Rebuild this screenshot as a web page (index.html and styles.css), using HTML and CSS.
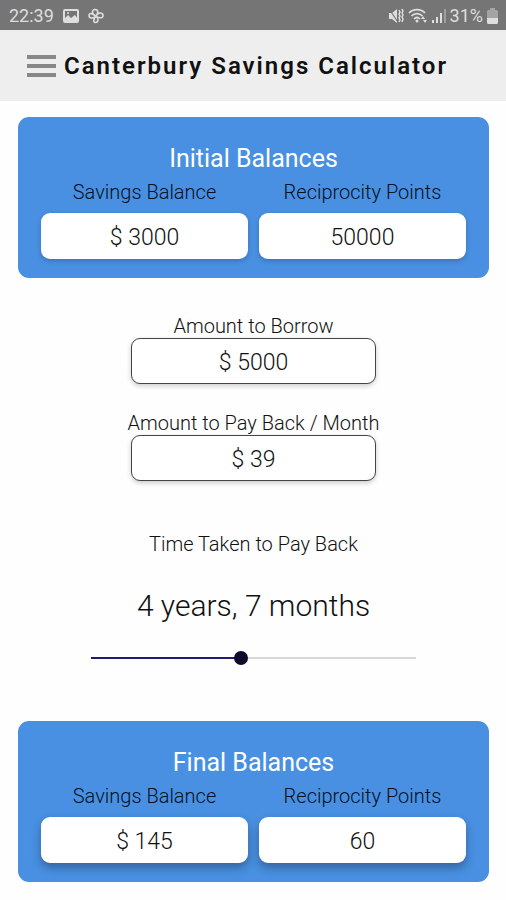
FILE: index.html
```html
<!DOCTYPE html>
<html lang="en">
<head>
  <meta charset="utf-8">
  <meta name="viewport" content="width=device-width, initial-scale=1">
  <title>Canterbury Savings Calculator</title>
  <link rel="stylesheet" href="styles.css">
</head>
<body>
  <div class="status">
    <div class="status-group">
      <span>22:39</span>
      <svg class="icon-picture" width="16" height="14" viewBox="0 0 16 14" aria-hidden="true">
        <rect x="1" y="1" width="14" height="12" rx="1" fill="none" stroke="currentColor" stroke-width="2"/>
        <path d="M2 11V9l3-3 3 3 4-3 3 4v2H2z" fill="currentColor"/>
        <circle cx="5" cy="4" r="1" fill="currentColor"/>
      </svg>
      <svg class="icon-fan" width="16" height="16" viewBox="0 0 16 16" fill="none" stroke="currentColor" stroke-width="1.6" aria-hidden="true">
        <path d="M8 8C4 7 3 1.500 7 1.500S10 6 8 8zM8 8c2-4 7-4 7-.5S10 10 8 8zM8 8c3 2 2.500 6.500-.5 6.500S6 10 8 8zM8 8c-3 3-7 2.500-7-.5S5 5.500 8 8z"/>
      </svg>
    </div>
    <div class="status-group status-right">
      <svg width="16" height="16" viewBox="0 0 16 16" fill="none" stroke="currentColor" aria-hidden="true">
        <path d="M1 5h3l5-4v14l-5-4H1z" fill="currentColor" stroke="none"/>
        <path d="M1 1l9 13" stroke="#757575" stroke-width="1.200"/>
        <path d="M11 2l1 2-1 2 1 2-1 2 1 2-1 2M14 1l1 2-1 2 1 2-1 2 1 2-1 3" stroke-width="1.500"/>
      </svg>
      <svg width="20" height="16" viewBox="0 0 20 16" fill="none" stroke="currentColor" stroke-width="1.700" aria-hidden="true">
        <path d="M1 5c4-4.500 12-4.500 16 0M3.500 8c3-3.300 8-3.300 11 0M6 11c2-2 4-2 6 0"/>
        <circle cx="9" cy="13" r="1.500" fill="currentColor" stroke="none"/>
        <path d="M13 11l2-3 2 3zM15 12h4l-2 3z" fill="currentColor" stroke="none"/>
      </svg>
      <svg width="14" height="14" viewBox="0 0 14 14" fill="currentColor" aria-hidden="true">
        <path d="M0 11h2v3H0zM4 8h2v6H4zM8 4h2v10H8z"/>
        <path d="M12 0h2v14h-2z" opacity=".4"/>
      </svg>
      <span>31%</span>
      <svg width="11" height="16" viewBox="0 0 11 16" fill="currentColor" aria-hidden="true">
        <path d="M3 0h5v2h2l1 1v7H0V3l1-1h2z" opacity=".45"/>
        <path d="M0 10h11v5l-1 1H1l-1-1z"/>
      </svg>
    </div>
  </div>

  <header class="header">
    <button class="menu" type="button" aria-label="Menu">
      <span class="menu-bar"></span>
      <span class="menu-bar"></span>
      <span class="menu-bar"></span>
    </button>
    <h1 class="title">Canterbury Savings Calculator</h1>
  </header>

  <main class="main">
    <section class="card">
      <h2 class="card-title">Initial Balances</h2>
      <div class="fields">
        <div class="field">
          <label class="label" for="initial-savings">Savings Balance</label>
          <input class="input" id="initial-savings" type="text" value="$ 3000">
        </div>
        <div class="field">
          <label class="label" for="initial-points">Reciprocity Points</label>
          <input class="input" id="initial-points" type="text" value="50000">
        </div>
      </div>
    </section>

    <section class="loan">
      <div class="field loan-field">
        <label class="label" for="borrow">Amount to Borrow</label>
        <input class="input input-outlined" id="borrow" type="text" value="$ 5000">
      </div>
      <div class="field loan-field">
        <label class="label" for="pay-back">Amount to Pay Back / Month</label>
        <input class="input input-outlined" id="pay-back" type="text" value="$ 39">
      </div>
      <div class="duration">
        <label class="label" for="months">Time Taken to Pay Back</label>
        <output class="duration-value" for="months">4 years, 7 months</output>
        <input class="slider" id="months" type="range" min="0" max="120" value="55">
      </div>
    </section>

    <section class="card card-final">
      <h2 class="card-title">Final Balances</h2>
      <div class="fields">
        <div class="field">
          <label class="label" for="final-savings">Savings Balance</label>
          <input class="input" id="final-savings" type="text" value="$ 145" readonly>
        </div>
        <div class="field">
          <label class="label" for="final-points">Reciprocity Points</label>
          <input class="input" id="final-points" type="text" value="60" readonly>
        </div>
      </div>
    </section>
  </main>
</body>
</html>
```
FILE: styles.css
```css
* {
  box-sizing: border-box;
}

body {
  margin: 0;
  background: #fefefe;
  color: #111;
  font-family: Roboto, "Liberation Sans", sans-serif;
}

.status {
  display: flex;
  align-items: center;
  justify-content: space-between;
  height: 30px;
  padding: 2px 8px 0 9px;
  background: #757575;
  color: #dedede;
  font-size: 18px;
  line-height: 24px;
}

.status-group {
  display: flex;
  align-items: center;
  gap: 9px;
}

.status-right {
  gap: 4px;
}

.header {
  display: flex;
  align-items: center;
  gap: 8px;
  height: 71px;
  padding: 0 27px;
  background: #eee;
}

.menu {
  display: flex;
  flex-direction: column;
  gap: 5px;
  flex: none;
  width: 29px;
  padding: 0;
  border: 0;
  background: none;
}

.menu-bar {
  width: 100%;
  height: 4px;
  background: #888;
}

.title {
  margin: 0;
  font-size: 24px;
  font-weight: 600;
  line-height: 32px;
  letter-spacing: 2px;
  white-space: nowrap;
}

.main {
  padding: 16px 17px 16px 18px;
}

.card {
  padding: 25px 23px 19px;
  border-radius: 11px;
  background: #4990e2;
}

.card-title {
  margin: 0;
  color: #fff;
  font-size: 25px;
  font-weight: 400;
  line-height: 34px;
  text-align: center;
}

.fields {
  display: grid;
  grid-template-columns: 1fr 1fr;
  gap: 11px;
}

.field {
  display: flex;
  flex-direction: column;
}

.label {
  font-size: 20px;
  font-weight: 300;
  line-height: 24px;
  text-align: center;
  white-space: nowrap;
}

.fields .label {
  padding: 4px 0 9px;
  color: #06101f;
}

.input {
  width: 100%;
  height: 46px;
  padding: 2px 10px 0;
  border: 0;
  border-radius: 9px;
  background: #fff;
  box-shadow: 0 2px 5px rgba(0, 0, 0, 0.2);
  color: #111;
  font: 300 23px/28px Roboto, "Liberation Sans", sans-serif;
  text-align: center;
}

.card-final .input {
  box-shadow: 0 5px 10px rgba(0, 0, 0, 0.3);
}

.loan {
  display: flex;
  flex-direction: column;
  align-items: center;
  gap: 27px;
  padding: 36px 0 55px;
}

.loan-field {
  align-items: center;
  width: 52%;
}

.input-outlined {
  border: 1px solid #444;
}

.duration {
  display: flex;
  flex-direction: column;
  align-items: center;
  width: 100%;
  padding-top: 24px;
}

.duration-value {
  padding: 32px 0 26px;
  font-size: 30px;
  font-weight: 300;
  line-height: 36px;
}

.slider {
  width: 69%;
  height: 16px;
  margin: 0;
  appearance: none;
  background: linear-gradient(#211b70, #211b70) left center / 46% 2px no-repeat,
    linear-gradient(#d8d8d8, #d8d8d8) center / 100% 2px no-repeat;
}

.slider::-webkit-slider-thumb {
  width: 14px;
  height: 14px;
  appearance: none;
  border-radius: 50%;
  background: #0f0a2c;
}
```
